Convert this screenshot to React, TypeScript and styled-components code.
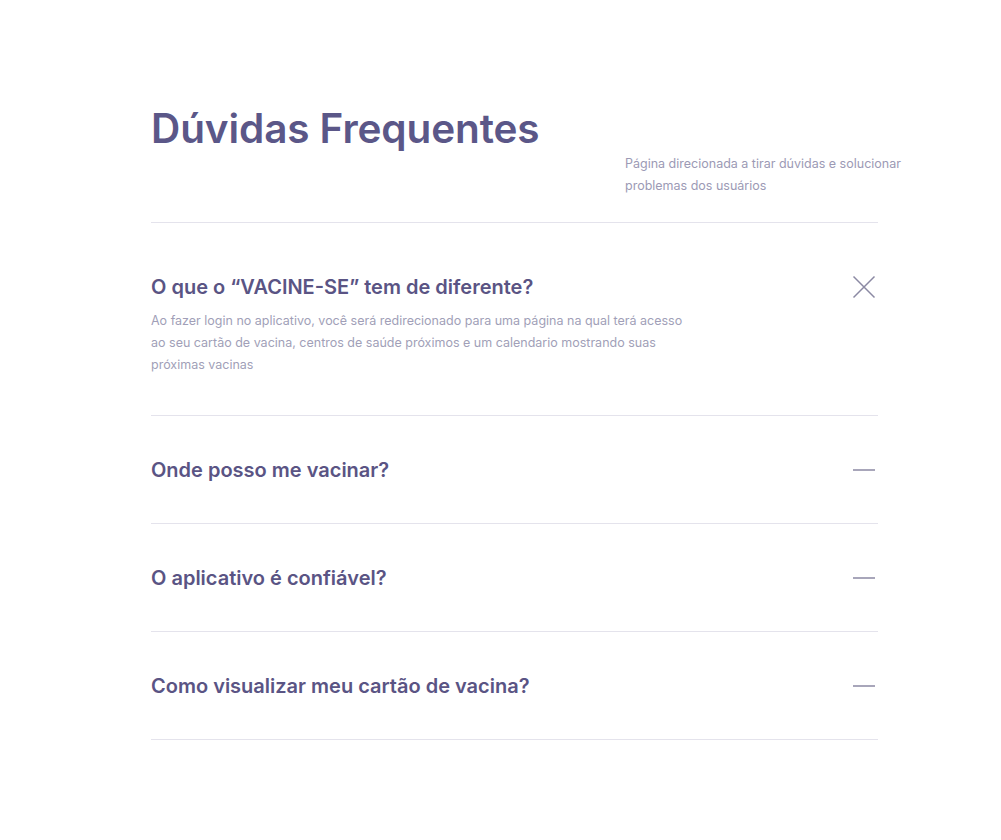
import React from "react";
import styled, { createGlobalStyle } from "styled-components";

const Global = createGlobalStyle`
  html, body { margin: 0; padding: 0; background: #ffffff; }
  body { font-family: "Inter", "Noto Sans", sans-serif; }
`;

const Page = styled.div`
  min-height: 840px;
  padding: 104px 0 0 151px;
  box-sizing: border-box;
`;

const Header = styled.header`
  display: flex;
  justify-content: space-between;
  align-items: flex-start;
  width: 764px;
`;

const Title = styled.h1`
  margin: 0;
  font-size: 40.5px;
  line-height: 50px;
  font-weight: 600;
  color: #5b5788;
  letter-spacing: -0.1px;
`;

const Subtitle = styled.p`
  margin: 49px 0 0 0;
  width: 290px;
  font-size: 12.5px;
  line-height: 22px;
  color: #9c9ab5;
  font-weight: 400;
`;

const List = styled.div`
  width: 727px;
  margin-top: 25px;
  border-top: 1px solid #e4e3ec;
`;

const Item = styled.div<{ $open?: boolean }>`
  border-bottom: 1px solid #e4e3ec;
  padding: ${(p) => (p.$open ? "50px 0 39px" : "0")};
  min-height: ${(p) => (p.$open ? "auto" : "107px")};
  display: flex;
  flex-direction: column;
  justify-content: center;
`;

const QuestionRow = styled.div`
  display: flex;
  align-items: center;
  justify-content: space-between;
`;

const Question = styled.h3`
  margin: 0;
  font-size: 20px;
  line-height: 28px;
  font-weight: 600;
  color: #5a5484;
`;

const Answer = styled.p`
  margin: 9px 0 0 0;
  width: 545px;
  font-size: 12.5px;
  line-height: 22px;
  color: #a19fb8;
`;

const IconBox = styled.span`
  display: flex;
  width: 24px;
  height: 24px;
  margin-right: 2px;
`;

const CloseIcon = () => (
  <svg width="24" height="24" viewBox="0 0 24 24">
    <path d="M1.5 1.5 L22.5 22.5 M22.5 1.5 L1.5 22.5" stroke="#8b89a3" strokeWidth="1.5" fill="none" />
  </svg>
);

const MinusIcon = () => (
  <svg width="24" height="24" viewBox="0 0 24 24">
    <path d="M1 12 H23" stroke="#8b89a3" strokeWidth="1.5" fill="none" />
  </svg>
);

const faqs = [
  {
    q: "O que o “VACINE-SE” tem de diferente?",
    a: "Ao fazer login no aplicativo, você será redirecionado para uma página na qual terá acesso ao seu cartão de vacina, centros de saúde próximos e um calendario mostrando suas próximas vacinas",
    open: true,
  },
  { q: "Onde posso me vacinar?" },
  { q: "O aplicativo é confiável?" },
  { q: "Como visualizar meu cartão de vacina?" },
];

export default function App() {
  return (
    <>
      <Global />
      <Page>
        <Header>
          <Title>Dúvidas Frequentes</Title>
          <Subtitle>Página direcionada a tirar dúvidas e solucionar problemas dos usuários</Subtitle>
        </Header>
        <List>
          {faqs.map((f) => (
            <Item key={f.q} $open={f.open}>
              <QuestionRow>
                <Question>{f.q}</Question>
                <IconBox>{f.open ? <CloseIcon /> : <MinusIcon />}</IconBox>
              </QuestionRow>
              {f.open && <Answer>{f.a}</Answer>}
            </Item>
          ))}
        </List>
      </Page>
    </>
  );
}
